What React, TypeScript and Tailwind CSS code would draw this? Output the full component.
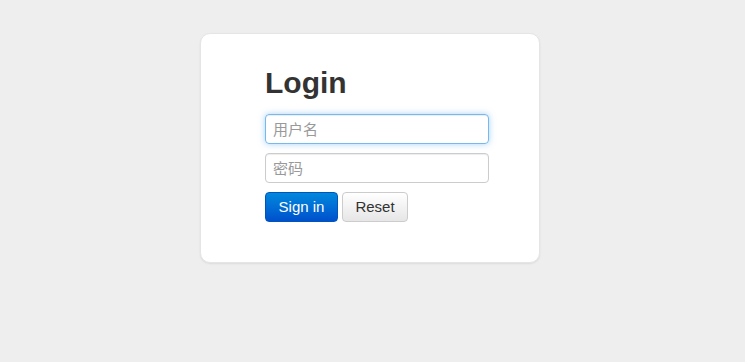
import React from "react";

export default function App() {
  return (
    <div
      className="min-h-[362px] w-full bg-[#eeeeee] pt-[33px]"
      style={{ fontFamily: '"Liberation Sans", Arial, "Noto Sans CJK SC", sans-serif' }}
    >
      <div className="ml-[200px] w-[340px] rounded-[10px] border border-[#e5e5e5] bg-white pl-[64px] pr-[50px] pt-[29px] pb-[40px] shadow-[0_1px_2px_rgba(0,0,0,0.08)]">
        <h2 className="mb-[11px] text-[30px] font-bold leading-[40px] text-[#333333]">Login</h2>
        <input
          autoFocus
          type="text"
          placeholder="用户名"
          className="mb-[9px] block h-[30px] w-[224px] rounded-[4px] border border-[rgba(82,168,236,0.8)] px-[7px] text-[15px] text-[#555] shadow-[inset_0_1px_1px_rgba(0,0,0,0.075),0_0_6px_rgba(82,168,236,0.5)] outline-none placeholder:text-[#999]"
        />
        <input
          type="password"
          placeholder="密码"
          className="mb-[9px] block h-[30px] w-[224px] rounded-[4px] border border-[#cccccc] px-[7px] text-[15px] text-[#555] shadow-[inset_0_1px_1px_rgba(0,0,0,0.075)] outline-none placeholder:text-[#999]"
        />
        <div className="flex gap-[4px]">
          <button className="h-[30px] w-[73px] rounded-[4px] border border-[#0055bb] bg-gradient-to-b from-[#0088dd] to-[#0050cc] text-[15px] leading-[20px] text-white">
            Sign in
          </button>
          <button className="h-[30px] w-[66px] rounded-[4px] border border-[#cccccc] bg-gradient-to-b from-white to-[#e6e6e6] text-[15px] leading-[20px] text-[#333]">
            Reset
          </button>
        </div>
      </div>
    </div>
  );
}
